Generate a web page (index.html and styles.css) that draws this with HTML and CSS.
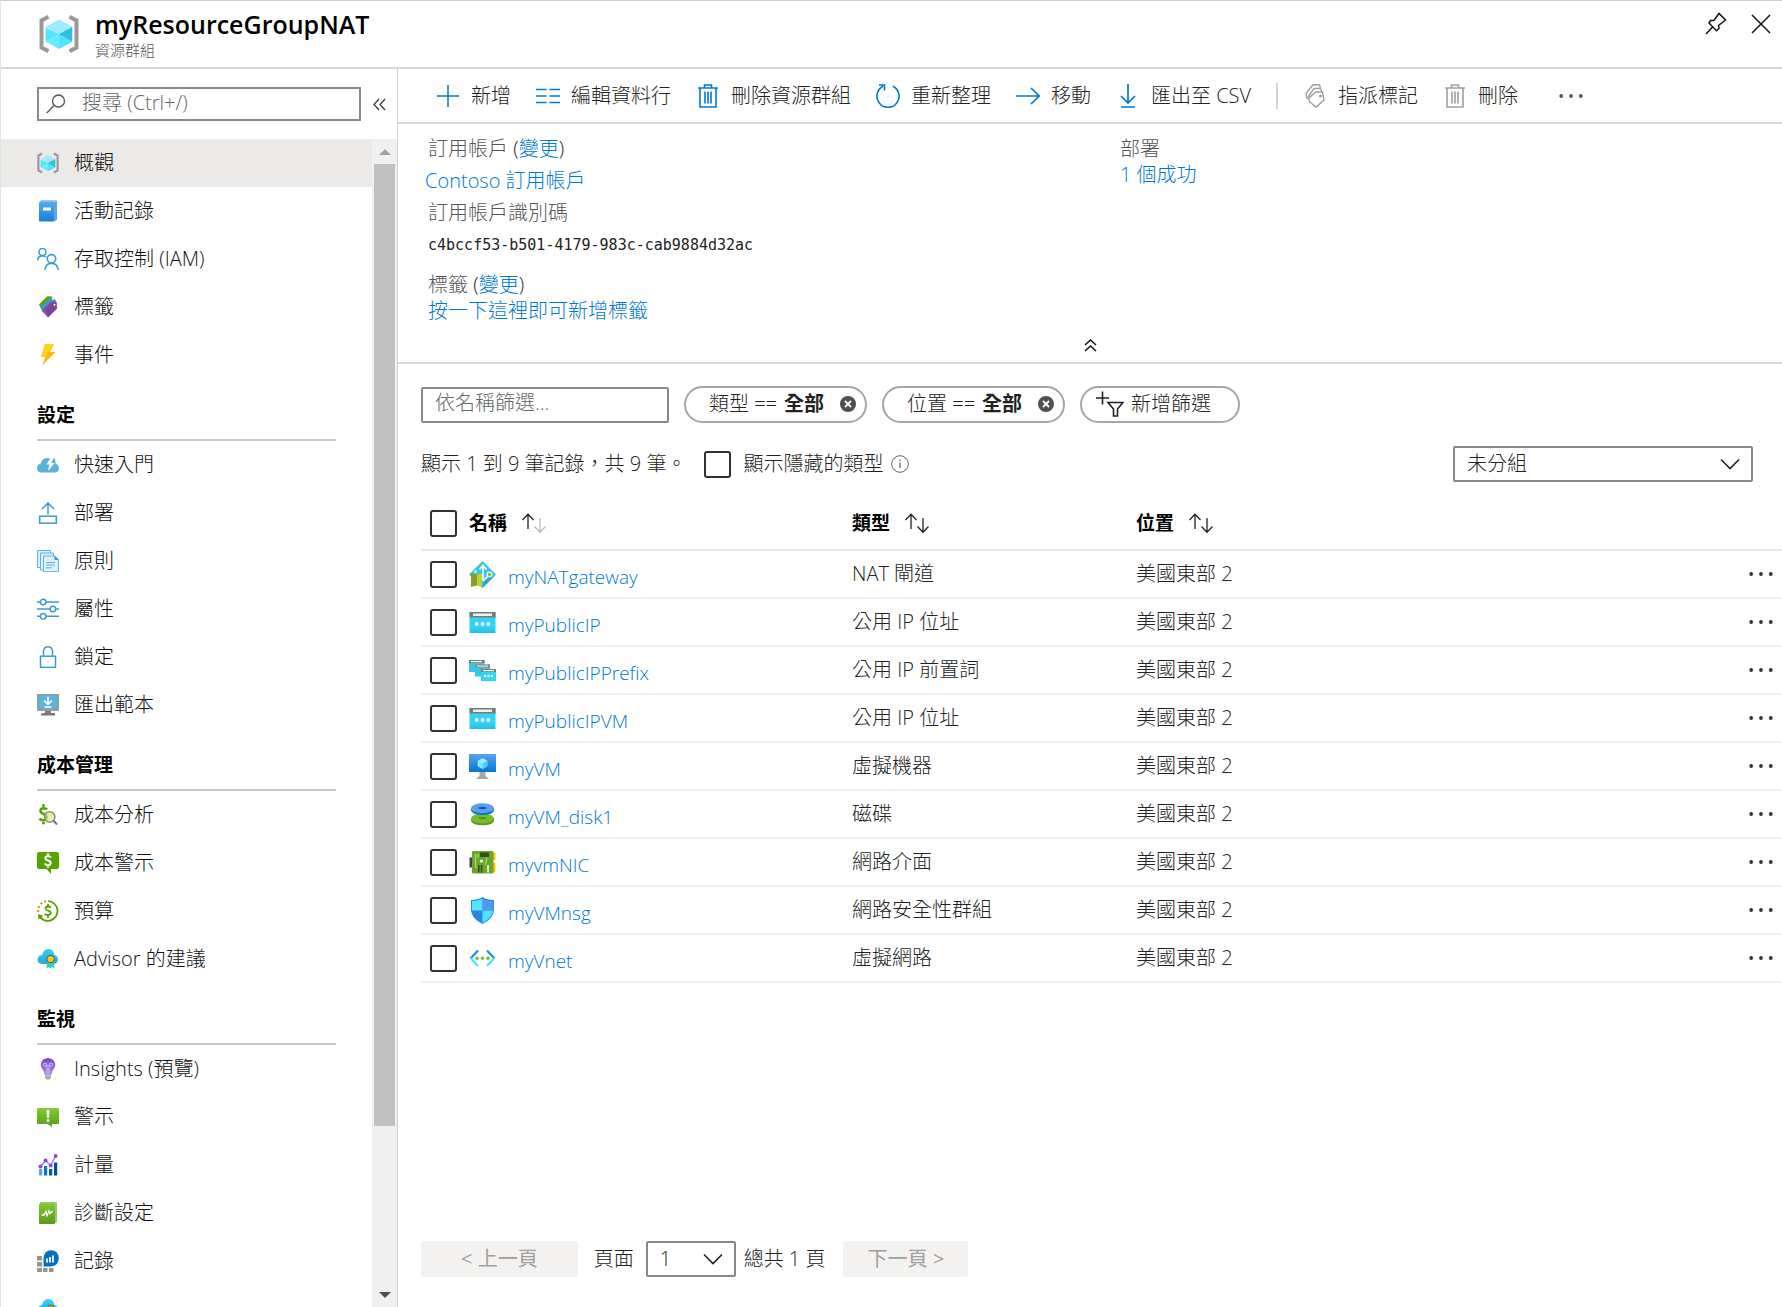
FILE: index.html
```html
<!DOCTYPE html>
<html lang="zh-Hant">
<head>
<meta charset="utf-8">
<meta name="viewport" content="width=device-width, initial-scale=1">
<title>myResourceGroupNAT</title>
<link rel="stylesheet" href="styles.css">
</head>
<body>
<svg class="sprite" aria-hidden="true">
  <defs>
    <linearGradient id="g-book" x1="0" y1="0" x2="0" y2="1"><stop offset="0" stop-color="#4db2f0"/><stop offset="1" stop-color="#1b7fd6"/></linearGradient>
    <linearGradient id="g-cloud" x1="0" y1="0" x2="0" y2="1"><stop offset="0" stop-color="#32d4f5"/><stop offset="1" stop-color="#27a5e0"/></linearGradient>
    <linearGradient id="g-bulb" x1="0" y1="0" x2="0" y2="1"><stop offset="0" stop-color="#7644d0"/><stop offset="1" stop-color="#b18cf5"/></linearGradient>
    <linearGradient id="g-green" x1="0" y1="0" x2="0" y2="1"><stop offset="0" stop-color="#7fcc2e"/><stop offset="1" stop-color="#5c9a1e"/></linearGradient>
    <linearGradient id="g-vm" x1="0" y1="0" x2="0" y2="1"><stop offset="0" stop-color="#5ea0ef"/><stop offset="1" stop-color="#0078d4"/></linearGradient>
    <linearGradient id="g-card" x1="0" y1="0" x2="0" y2="1"><stop offset="0" stop-color="#32d4f5"/><stop offset=".75" stop-color="#32d4f5"/><stop offset="1" stop-color="#2bb9de"/></linearGradient>
  </defs>
  <symbol id="i-rg" viewBox="0 0 40 38">
    <path d="M9.500 1.800L2.500 5.500V32.500L9.500 36.200M30.500 1.800L37.500 5.500V32.500L30.500 36.200" fill="none" stroke="#999" stroke-width="4"/>
    <path d="M20 4.500L33.300 11.800 20 19 6.700 11.800z" fill="#9cebff"/>
    <path d="M6.700 11.800L20 19V33.700L6.700 26.500z" fill="#9cebff"/>
    <path d="M6.700 13.500L20 19 6.700 26.500z" fill="#50e6ff"/>
    <path d="M6.700 26.500L20 19V33.700z" fill="#6aeaff"/>
    <path d="M33.300 11.800L20 19V33.700L33.300 26.500z" fill="#32bedd"/>
    <path d="M33.300 26.500L20 19V33.700z" fill="#50e6ff"/>
  </symbol>
  <symbol id="i-book" viewBox="0 0 22 22">
    <path d="M4.500 0H18.500Q20 0 20 1.500V20H18V2H3Q3 0 4.500 0z" fill="#a9c8e0"/>
    <path d="M2 3Q2 1.500 3.500 1.500H17V20.500Q17 21.500 16 21.500H3Q2 21.500 2 20.500z" fill="url(#g-book)"/>
    <path d="M17 2.500L20 0.800V20L17 21.500z" fill="#5fa7dd"/>
    <rect x="6" y="7.500" width="8" height="3" fill="#fff"/>
  </symbol>
  <symbol id="i-people" viewBox="0 0 22 22" fill="none" stroke="#3a9fd0" stroke-width="1.600">
    <circle cx="5.500" cy="4" r="3.500"/><path d="M.6 12.500Q1 8 5.500 7.600Q8 7.800 9 9"/>
    <circle cx="14.500" cy="10.800" r="4.200"/><path d="M7.800 21.800Q9 15.200 14.500 15.100Q20 15.200 21.300 21.800"/>
  </symbol>
  <symbol id="i-tags" viewBox="0 0 22 22">
    <path d="M2 8.500L10 .5Q16 -1 17.500 3.500L6 16z" fill="#57a300"/>
    <path d="M3 11.500L12 2.800Q18 1.500 19.500 6L8 17z" fill="#3a9bd0"/>
    <path d="M4.500 14.500L14 5.500L19.500 6.300L20 12.500L11 21.500z" fill="#8a4fa5"/>
    <path d="M11 21.500L20 12.500 19.500 6.300 16 5.800 9 13z" fill="#74398f" opacity=".6"/>
    <circle cx="16" cy="2.500" r="1.200" fill="#fff"/><circle cx="17.500" cy="8.800" r="1" fill="#fff"/>
  </symbol>
  <symbol id="i-bolt" viewBox="0 0 22 22">
    <path d="M8 0H17L13 8H18.500L5 21.500L8.500 12.500H4z" fill="#fcb813"/><path d="M8 0H17L8.500 12.500H4z" fill="#ffd31a"/>
  </symbol>
  <symbol id="i-quick" viewBox="0 0 22 22">
    <path d="M4 18.500Q0 18 0 14Q0 10.500 3.500 9.800Q5 4 10.500 4Q12 4 13 4.500L17 3.500Q19 6 18.500 9.500Q22 11 22 14.500Q21.500 18.500 18 18.500z" fill="#59b4d9"/>
    <path d="M14 3L9.500 10.500H12.500L11 17L17.500 9H14.200L17.500 3z" fill="#fff"/>
  </symbol>
  <symbol id="i-deploy" viewBox="0 0 22 22" fill="none" stroke="#3a9bc9" stroke-width="1.500"><rect x="2.700" y="14.200" width="16.600" height="7"/><path d="M11 12.500V.8M5 7L11 1L17 7"/></symbol>
  <symbol id="i-policy" viewBox="0 0 22 22">
    <g fill="#dff0f8" stroke="#59b4d9"><path d="M.5 .5H13.500V17.500H.5z"/><path d="M3.500 3H16.500V20H3.500z"/><path d="M6.500 6H17.500L21.500 10V21.700H6.500z"/></g>
    <path d="M17.500 5.500L22 10H17.500z" fill="#3a9bc9"/><path d="M9 12.500H18M9 15H18M9 17.800H15" stroke="#59b4d9"/>
  </symbol>
  <symbol id="i-props" viewBox="0 0 22 22" fill="none" stroke="#3a9bc9" stroke-width="1.400"><path d="M0 4H3.500M9 4H22M0 11H13M19 11H22M0 18.300H3.500M9 18.300H22"/><circle cx="6.200" cy="4" r="2.800"/><circle cx="15.900" cy="11" r="2.800"/><circle cx="6.200" cy="18.300" r="2.800"/></symbol>
  <symbol id="i-lock" viewBox="0 0 22 22" fill="none" stroke="#3a9bc9" stroke-width="1.500"><rect x="3.500" y="10.200" width="15" height="11.200"/><path d="M6.500 10V5.200Q7 .8 11 .8Q15 .8 15.500 5.200V10"/></symbol>
  <symbol id="i-export" viewBox="0 0 22 22">
    <rect width="22" height="17" fill="#999"/><rect x="1.500" y="1.500" width="19" height="13.500" fill="#59b4d9"/><path d="M8 17H14V19H18V21.500H4V19.500L8 19z" fill="#7a7a7a"/>
    <path d="M11 2.500V9.500M7 6.500L11 10.300L15 6.500M7.500 13H14.500" fill="none" stroke="#fff" stroke-width="1.600"/>
  </symbol>
  <symbol id="i-cost" viewBox="0 0 22 22">
    <path d="M10 5.500Q9 4.200 6.500 4.200Q3.500 4.300 3.500 6.800Q3.600 9 6.500 10Q9.500 11 9.500 13.500Q9 16.200 6 16.200Q3.500 16.200 2.500 14.500" fill="none" stroke="#57a300" stroke-width="2.600"/>
    <circle cx="6.500" cy="1.500" r="1.500" fill="#57a300"/><circle cx="6.500" cy="19" r="1.500" fill="#57a300"/>
    <circle cx="12.700" cy="13" r="5.200" fill="#cfe86a" fill-opacity=".6" stroke="#8a8a8a" stroke-width="1.500"/><path d="M16.500 16.800L20 20.500" stroke="#777" stroke-width="2"/>
  </symbol>
  <symbol id="i-costalert" viewBox="0 0 22 22">
    <path d="M2 0H20Q22 0 22 2V15Q22 17 20 17H14V22L9.500 17H2Q0 17 0 15V2Q0 0 2 0z" fill="#57a300"/>
    <path d="M14 5.500Q13 4 11 4Q8.300 4.200 8.300 6.200Q8.500 8 11 8.500Q13.800 9.200 13.800 11Q13.500 13.200 11 13.200Q8.800 13.200 7.800 11.500M11 1.200V4M11 13V15.800" fill="none" stroke="#fff" stroke-width="1.900"/>
  </symbol>
  <symbol id="i-budget" viewBox="0 0 22 22">
    <path d="M11 1.200A9.800 9.800 0 1 1 2 15.500" fill="none" stroke="#57a300" stroke-width="1.800"/><path d="M1 14L6.500 15.800L1.500 19.500z" fill="#57a300"/>
    <path d="M1.200 12A9.800 9.800 0 0 1 9 1.200" fill="none" stroke="#e08a00" stroke-width="2" stroke-dasharray="2 2.200"/>
    <path d="M14 7.500Q13 6.500 11 6.500Q8.500 6.700 8.500 8.500Q8.700 10 11 10.600Q13.800 11.300 13.800 13Q13.500 15 11 15Q8.800 15 7.800 13.800M11 4V7M11 15V18" fill="none" stroke="#57a300" stroke-width="1.800"/>
  </symbol>
  <symbol id="i-advisor" viewBox="0 0 22 22">
    <path d="M5 16Q.5 15.500 .5 11.500Q1 7.500 5 7Q6.500 1 11.500 1Q16.500 1.500 17.500 7Q21 8 21 11.500Q20.500 15.500 17 16z" fill="url(#g-cloud)"/>
    <path d="M10 14L9.500 20.500L12 19L13.500 21L15 19L17.500 20.500L17 14z" fill="#35d0bd"/><circle cx="13.600" cy="11" r="3.700" fill="#ffca00" stroke="#5a6470" stroke-width="1.200"/>
  </symbol>
  <symbol id="i-bulb" viewBox="0 0 22 22">
    <path d="M11 0Q18 .5 18.300 7Q18 10 15.500 13Q14.500 15 14.200 17.500H7.800Q7.500 15 6.500 13Q4 10 3.700 7Q4 .5 11 0z" fill="url(#g-bulb)"/>
    <path d="M10 16V7.500Q10 5 8 5Q6 5 6.300 7Q7 8.500 10 7.500M12 16V7.500Q12 5 14 5Q16 5 15.700 7Q15 8.500 12 7.500" fill="none" stroke="#d9c4ff"/><path d="M8 18H14V20L12.500 21.500H9.500L8 20z" fill="#aaa"/>
  </symbol>
  <symbol id="i-alert" viewBox="0 0 22 22">
    <path d="M1 2H21Q22 2 22 3V17Q22 18 21 18H15V21L10.500 18H1Q0 18 0 17V3Q0 2 1 2z" fill="url(#g-green)"/><path d="M9.500 4H12.500L12 12H10z" fill="#fff"/><rect x="9.800" y="13.200" width="2.500" height="2.500" fill="#fff"/>
  </symbol>
  <symbol id="i-metrics" viewBox="0 0 22 22">
    <rect x="2" y="15" width="3.200" height="6.500" fill="#5ea0ef"/><rect x="7" y="12" width="3.200" height="9.500" fill="#0078d4"/><rect x="12" y="15" width="3.200" height="6.500" fill="#005ba1"/><rect x="17" y="8.500" width="3.200" height="13" fill="#00508f"/>
    <path d="M3.500 12.500L8.500 6.500L13.700 11.500L18.600 2" fill="none" stroke="#a67af4" stroke-width="1.500"/><g fill="#8a4ae0"><circle cx="3.500" cy="12.500" r="2"/><circle cx="8.500" cy="6.500" r="2"/><circle cx="13.700" cy="11.500" r="2"/><circle cx="18.600" cy="2" r="2"/></g>
  </symbol>
  <symbol id="i-diag" viewBox="0 0 22 22">
    <path d="M4 0H19Q20 0 20 1V20L18 21H3V1Q3 0 4 0z" fill="#9fc47a"/><rect x="2" y="1.500" width="16" height="20.500" rx="1" fill="url(#g-green)"/><path d="M4.500 13H7L9 9.500L10 13.500L12 8.800L13 11.500L15.500 9" fill="none" stroke="#fff" stroke-width="1.400"/>
  </symbol>
  <symbol id="i-logs" viewBox="0 0 22 22">
    <g fill="#949494"><path d="M0 6H5V10.500H0zM0 12H5V16.500H0zM0 18H5V22H0zM6 18H10.500V22H6zM12 18H16.500V22H12z"/></g>
    <path d="M6.500 16.500V8Q7.500 .5 14 .3Q21 .5 21.800 8Q21.500 16 14 16.500z" fill="#0072c6"/><path d="M10 8.500V12.500M13 7V12.500M16 5.500V12.500" stroke="#fff" stroke-width="1.800"/>
  </symbol>

  <symbol id="t-plus" viewBox="0 0 24 24" fill="none" stroke="#0078d4" stroke-width="1.500"><path d="M12 1V23M1 12H23"/></symbol>
  <symbol id="t-cols" viewBox="0 0 24 24" stroke="#0078d4" stroke-width="1.600"><path d="M0 5.500H10.500M0 12H10.500M0 18.500H10.500M13.500 5.500H24M13.500 12H24M13.500 18.500H24"/></symbol>
  <symbol id="t-trash" viewBox="0 0 24 24" fill="none" stroke="currentColor" stroke-width="1.600"><path d="M2 4H22M4 4V23H20V4M8.500 4V1H15.500V4M9 7.500V19.500M12 7.500V19.500M15 7.500V19.500"/></symbol>
  <symbol id="t-refresh" viewBox="0 0 24 24" fill="none" stroke="#0078d4" stroke-width="1.600"><path d="M17 2.200A11 11.200 0 1 1 7 2.200M3 1H8.500V6.500"/></symbol>
  <symbol id="t-arrow" viewBox="0 0 24 24" fill="none" stroke="#0078d4" stroke-width="1.700"><path d="M0 12H23M15 4L23.200 12L15 20"/></symbol>
  <symbol id="t-down" viewBox="0 0 24 24" fill="none" stroke="#0078d4" stroke-width="1.700"><path d="M12 0V18.500M5 12L12 19L19 12M5 23H19"/></symbol>
  <symbol id="t-tags" viewBox="0 0 24 24" fill="none" stroke="#a0a0a0" stroke-width="1.400"><path d="M4 15L3 9.500L10 .8H16.500L17.500 4M5 13L11 4.500H17.500L19 8M7 19L5.500 14.500L12.500 8H19.500L21 16L13 23.300L7 18"/><circle cx="17.500" cy="12" r=".8"/></symbol>
  <symbol id="t-more" viewBox="0 0 24 6"><circle cx="2.200" cy="3" r="1.900"/><circle cx="12" cy="3" r="1.900"/><circle cx="21.800" cy="3" r="1.900"/></symbol>
  <symbol id="t-sort" viewBox="0 0 26 22" fill="none" stroke="#222" stroke-width="1.300"><path d="M7 17V2.500M1.500 8L7 2.300L12.500 8"/><path class="sort-down" d="M19 6V20M13.500 14.500L19 20.200L24.500 14.500"/></symbol>
  <symbol id="t-chev" viewBox="0 0 20 12" fill="none" stroke="#222" stroke-width="1.600"><path d="M1 1.500L10 10.500L19 1.500"/></symbol>

  <symbol id="r-nat" viewBox="0 0 27 27">
    <path d="M13.500 0L27 13.500L13.500 27L0 13.500z" fill="#32c8ea"/><path d="M13.500 27L25 15.500L20 16L15 21z" fill="#2aa5c9"/>
    <path d="M2 12L8 13.500V24.500L2 26z" fill="#86a02a"/><path d="M8 13.500L13 12.500V26L8 24.500z" fill="#b9d532"/>
    <path d="M14 20V5M10.500 8.500L14 4.500L17.500 8.500M14 20L20 14" fill="none" stroke="#fff" stroke-width="1.600"/><circle cx="20.500" cy="13.500" r="3" fill="#fff"/><circle cx="20.500" cy="13.500" r="1.700" fill="#86c232"/><circle cx="6.500" cy="10.500" r="1.500" fill="#d8f6ff"/>
  </symbol>
  <symbol id="r-ip" viewBox="0 0 27 27">
    <rect x=".5" y="3" width="26" height="21" fill="url(#g-card)"/><rect x=".5" y="3" width="26" height="5.500" fill="#7a7a7a"/><rect x="4" y="4.500" width="19" height="2.500" fill="#f2f2f2"/>
    <g fill="#fff"><circle cx="7.700" cy="15" r="1.900"/><circle cx="13.500" cy="15" r="1.900"/><circle cx="19.300" cy="15" r="1.900"/></g>
  </symbol>
  <symbol id="r-prefix" viewBox="0 0 27 27">
    <rect y="3" width="15.500" height="12" fill="#32c8ea"/><rect y="3" width="15.500" height="3" fill="#7a7a7a"/><rect x="2" y="4" width="11" height="1.200" fill="#fff"/>
    <rect x="6" y="7.500" width="15" height="12" fill="#32c8ea"/><rect x="6" y="7.500" width="15" height="3.200" fill="#8a8a8a"/><rect x="8" y="8.500" width="11" height="1.300" fill="#ddd"/>
    <rect x="12" y="12" width="15" height="12" fill="#32d4f5"/><rect x="12" y="12" width="15" height="3" fill="#7a7a7a"/><rect x="14" y="13" width="11" height="1.200" fill="#fff"/>
    <g fill="#fff"><circle cx="16" cy="19" r="1.200"/><circle cx="19.500" cy="19" r="1.200"/><circle cx="23" cy="19" r="1.200"/></g>
  </symbol>
  <symbol id="r-vm" viewBox="0 0 27 27">
    <rect y="1" width="27" height="18" rx=".6" fill="url(#g-vm)"/><path d="M10.500 19H16.500V23L20 26H7L10.500 23z" fill="#a8a8a8"/>
    <path d="M13.500 5L18.300 7.700V13.200L13.500 16L8.700 13.200V7.700z" fill="#9cebff"/><path d="M18.300 7.700V13.200L13.500 16V10.500z" fill="#50d0f0"/><path d="M8.700 7.700L13.500 10.500V16z" fill="#6ae6ff"/>
  </symbol>
  <symbol id="r-disk" viewBox="0 0 27 27">
    <path d="M2 17.500V20Q4 24.300 13.500 24.300Q23 24.300 25 20V17.500z" fill="#5e9624"/><ellipse cx="13.500" cy="17.500" rx="11.500" ry="5" fill="#76bc2d"/><ellipse cx="13.500" cy="17" rx="4" ry="1" fill="#558b21"/>
    <path d="M2 7.500V9.500Q4 14 13.500 14Q23 14 25 9.500V7.500z" fill="#0078d4"/><ellipse cx="13.500" cy="7.200" rx="11.500" ry="5" fill="#5ea0ef"/><ellipse cx="13.500" cy="7" rx="4" ry="1.200" fill="#0062ad"/>
  </symbol>
  <symbol id="r-nic" viewBox="0 0 27 27">
    <rect x=".5" y="8.500" width="3" height="10" fill="#444"/><rect x="24" y="4" width="2.500" height="7" fill="#ffca00"/><rect x="24" y="14" width="2.500" height="9" fill="#ffca00"/>
    <rect x="3" y="2" width="21.500" height="22.500" rx="1" fill="#69a52c"/><rect x="11" y="3.500" width="9" height="4.500" fill="#2f4f14"/>
    <path d="M6.500 5V18H8M9 5V9M17.500 8V12L16 16" fill="none" stroke="#a6e04a" stroke-width="1.300"/><circle cx="12.500" cy="12" r="1.600" fill="#fff"/><path d="M9.800 16V23.500M12.500 16V23.500" stroke="#2f4f14" stroke-width="1.500"/><path d="M19 16V23.500" stroke="#fff" stroke-width="1.500"/>
  </symbol>
  <symbol id="r-nsg" viewBox="0 0 27 27">
    <path d="M13.500 0Q17 2.500 25 3V13Q24.500 21.500 13.500 27Q2.500 21.500 2 13V3Q10 2.500 13.500 0z" fill="#2c86e0"/>
    <path d="M13.500 1.500Q10 3.700 3 4.200V13.500H13.500z" fill="#50e6ff"/><path d="M13.500 13.500H24Q23 21 13.500 26z" fill="#50e6ff"/><path d="M13.500 1.500Q17 3.700 24 4.200V13.500H13.500z" fill="#4f9cec"/>
  </symbol>
  <symbol id="r-vnet" viewBox="0 0 27 27" fill="none" stroke-width="2.200">
    <path d="M9 5.500L1.500 13.500M18 5.500L25.500 13.500" stroke="#1b8fe0"/><path d="M1.500 13L9 21M25.500 13L18 21" stroke="#50e0fa"/><g fill="#76bc2d"><circle cx="8" cy="13.300" r="1.700"/><circle cx="13.500" cy="13.300" r="1.700"/><circle cx="19" cy="13.300" r="1.700"/></g>
  </symbol>
</svg>

<div class="blade">
  <header class="blade-head">
    <svg class="blade-icon"><use href="#i-rg"/></svg>
    <div class="blade-titles">
      <h1>myResourceGroupNAT</h1>
      <p>資源群組</p>
    </div>
    <button class="plain" aria-label="釘選"><svg width="22" height="24" viewBox="0 0 22 24" fill="none" stroke="#111" stroke-width="1.500"><path d="M1 22L7.500 15M4 11L11.500 18.800L14 16.500L13.500 13.500L20.500 8L14 1.500L8.800 8.500L5.500 8.500z"/></svg></button>
    <button class="plain" aria-label="關閉"><svg width="20" height="24" viewBox="0 0 20 24" fill="none" stroke="#111" stroke-width="1.500"><path d="M1 3L19 21M19 3L1 21"/></svg></button>
  </header>

  <div class="blade-body">
    <aside class="side">
      <div class="search-row">
        <div class="search">
          <svg width="20" height="20" viewBox="0 0 20 20" fill="none" stroke="#555" stroke-width="1.300"><circle cx="12.500" cy="7" r="6"/><path d="M8 11.500L.8 19"/></svg>
          <input type="text" placeholder="搜尋 (Ctrl+/)" aria-label="搜尋">
        </div>
        <button class="plain" aria-label="摺疊功能表"><svg width="13" height="13" viewBox="0 0 13 13" fill="none" stroke="#333" stroke-width="1.200"><path d="M6 1L1 6.500L6 12M12 1L7 6.500L12 12"/></svg></button>
      </div>
      <div class="side-scroll">
        <nav class="menu">
          <a class="current" href="#"><svg><use href="#i-rg"/></svg>概觀</a>
          <a href="#"><svg><use href="#i-book"/></svg>活動記錄</a>
          <a href="#"><svg><use href="#i-people"/></svg>存取控制 (IAM)</a>
          <a href="#"><svg><use href="#i-tags"/></svg>標籤</a>
          <a href="#"><svg><use href="#i-bolt"/></svg>事件</a>
          <h2>設定</h2>
          <a href="#"><svg><use href="#i-quick"/></svg>快速入門</a>
          <a href="#"><svg><use href="#i-deploy"/></svg>部署</a>
          <a href="#"><svg><use href="#i-policy"/></svg>原則</a>
          <a href="#"><svg><use href="#i-props"/></svg>屬性</a>
          <a href="#"><svg><use href="#i-lock"/></svg>鎖定</a>
          <a href="#"><svg><use href="#i-export"/></svg>匯出範本</a>
          <h2>成本管理</h2>
          <a href="#"><svg><use href="#i-cost"/></svg>成本分析</a>
          <a href="#"><svg><use href="#i-costalert"/></svg>成本警示</a>
          <a href="#"><svg><use href="#i-budget"/></svg>預算</a>
          <a href="#"><svg><use href="#i-advisor"/></svg>Advisor 的建議</a>
          <h2>監視</h2>
          <a href="#"><svg><use href="#i-bulb"/></svg>Insights (預覽)</a>
          <a href="#"><svg><use href="#i-alert"/></svg>警示</a>
          <a href="#"><svg><use href="#i-metrics"/></svg>計量</a>
          <a href="#"><svg><use href="#i-diag"/></svg>診斷設定</a>
          <a href="#"><svg><use href="#i-logs"/></svg>記錄</a>
          <a href="#" aria-label="Advisor"><svg><use href="#i-advisor"/></svg></a>
        </nav>
        <div class="bar" aria-hidden="true">
          <svg width="12" height="6" viewBox="0 0 12 6"><path d="M0 6L6 0L12 6z" fill="#a3a3a3"/></svg>
          <div class="track"><div class="thumb"></div></div>
          <svg width="12" height="6" viewBox="0 0 12 6"><path d="M0 0L6 6L12 0z" fill="#505050"/></svg>
        </div>
      </div>
    </aside>

    <main class="main">
      <div class="toolbar">
        <button><svg><use href="#t-plus"/></svg>新增</button>
        <button><svg><use href="#t-cols"/></svg>編輯資料行</button>
        <button><svg class="blue"><use href="#t-trash"/></svg>刪除資源群組</button>
        <button><svg><use href="#t-refresh"/></svg>重新整理</button>
        <button><svg><use href="#t-arrow"/></svg>移動</button>
        <button><svg><use href="#t-down"/></svg>匯出至 CSV</button>
        <span class="divider"></span>
        <button><svg><use href="#t-tags"/></svg>指派標記</button>
        <button><svg class="gray"><use href="#t-trash"/></svg>刪除</button>
        <button class="more-tools" aria-label="其他"><svg><use href="#t-more"/></svg></button>
      </div>

      <section class="essentials">
        <div class="facts">
          <div class="facts-left">
            <p>訂用帳戶 <span class="ink">(<a href="#">變更</a>)</span></p>
            <p class="account"><a href="#">Contoso 訂用帳戶</a></p>
            <p>訂用帳戶識別碼</p>
            <p class="mono">c4bccf53-b501-4179-983c-cab9884d32ac</p>
            <div class="tags">
              <p>標籤 <span class="ink">(<a href="#">變更</a>)</span></p>
              <p><a href="#">按一下這裡即可新增標籤</a></p>
            </div>
          </div>
          <div class="facts-right">
            <p>部署</p>
            <p><a href="#">1 個成功</a></p>
          </div>
        </div>
        <button class="plain fold" aria-label="收合"><svg width="13" height="13" viewBox="0 0 13 13" fill="none" stroke="#111" stroke-width="1.500"><path d="M1 6L6.500 1L12 6M1 12L6.500 7L12 12"/></svg></button>
      </section>

      <section class="list">
        <div class="filters">
          <input class="name-filter" type="text" placeholder="依名稱篩選..." aria-label="依名稱篩選">
          <button class="pill">類型 == <b>全部</b><svg width="16" height="16" viewBox="0 0 16 16"><circle cx="8" cy="8" r="8" fill="#505050"/><path d="M5 5L11 11M11 5L5 11" stroke="#fff" stroke-width="1.800"/></svg></button>
          <button class="pill">位置 == <b>全部</b><svg width="16" height="16" viewBox="0 0 16 16"><circle cx="8" cy="8" r="8" fill="#505050"/><path d="M5 5L11 11M11 5L5 11" stroke="#fff" stroke-width="1.800"/></svg></button>
          <button class="pill add"><svg width="28" height="26" viewBox="0 0 28 26" fill="none" stroke="#222" stroke-width="1.600"><path d="M0 7H13M6.500 .5V13.500M12 11.500H27L21.500 18V25H17.500V18z"/></svg>新增篩選</button>
        </div>

        <div class="summary">
          <span>顯示 1 到 9 筆記錄，共 9 筆。</span>
          <label><input type="checkbox">顯示隱藏的類型</label>
          <svg width="18" height="18" viewBox="0 0 18 18" fill="none" stroke="#666"><circle cx="9" cy="9" r="8.300"/><path d="M9 7.500V13M9 4.500V6" stroke-width="1.300"/></svg>
          <span class="drop group"><select aria-label="分組"><option>未分組</option></select><svg><use href="#t-chev"/></svg></span>
        </div>

        <table class="grid">
          <colgroup><col class="c-check"><col class="c-name"><col class="c-type"><col><col class="c-more"></colgroup>
          <thead>
            <tr>
              <th><input type="checkbox" aria-label="全選"></th>
              <th><span class="sort half">名稱<svg><use href="#t-sort"/></svg></span></th>
              <th><span class="sort">類型<svg><use href="#t-sort"/></svg></span></th>
              <th><span class="sort">位置<svg><use href="#t-sort"/></svg></span></th>
              <th></th>
            </tr>
          </thead>
          <tbody>
            <tr><td><input type="checkbox" aria-label="myNATgateway"></td><td><a href="#"><svg><use href="#r-nat"/></svg><span>myNATgateway</span></a></td><td>NAT 閘道</td><td>美國東部 2</td><td><button class="plain" aria-label="其他"><svg><use href="#t-more"/></svg></button></td></tr>
            <tr><td><input type="checkbox" aria-label="myPublicIP"></td><td><a href="#"><svg><use href="#r-ip"/></svg><span>myPublicIP</span></a></td><td>公用 IP 位址</td><td>美國東部 2</td><td><button class="plain" aria-label="其他"><svg><use href="#t-more"/></svg></button></td></tr>
            <tr><td><input type="checkbox" aria-label="myPublicIPPrefix"></td><td><a href="#"><svg><use href="#r-prefix"/></svg><span>myPublicIPPrefix</span></a></td><td>公用 IP 前置詞</td><td>美國東部 2</td><td><button class="plain" aria-label="其他"><svg><use href="#t-more"/></svg></button></td></tr>
            <tr><td><input type="checkbox" aria-label="myPublicIPVM"></td><td><a href="#"><svg><use href="#r-ip"/></svg><span>myPublicIPVM</span></a></td><td>公用 IP 位址</td><td>美國東部 2</td><td><button class="plain" aria-label="其他"><svg><use href="#t-more"/></svg></button></td></tr>
            <tr><td><input type="checkbox" aria-label="myVM"></td><td><a href="#"><svg><use href="#r-vm"/></svg><span>myVM</span></a></td><td>虛擬機器</td><td>美國東部 2</td><td><button class="plain" aria-label="其他"><svg><use href="#t-more"/></svg></button></td></tr>
            <tr><td><input type="checkbox" aria-label="myVM_disk1"></td><td><a href="#"><svg><use href="#r-disk"/></svg><span>myVM_disk1</span></a></td><td>磁碟</td><td>美國東部 2</td><td><button class="plain" aria-label="其他"><svg><use href="#t-more"/></svg></button></td></tr>
            <tr><td><input type="checkbox" aria-label="myvmNIC"></td><td><a href="#"><svg><use href="#r-nic"/></svg><span>myvmNIC</span></a></td><td>網路介面</td><td>美國東部 2</td><td><button class="plain" aria-label="其他"><svg><use href="#t-more"/></svg></button></td></tr>
            <tr><td><input type="checkbox" aria-label="myVMnsg"></td><td><a href="#"><svg><use href="#r-nsg"/></svg><span>myVMnsg</span></a></td><td>網路安全性群組</td><td>美國東部 2</td><td><button class="plain" aria-label="其他"><svg><use href="#t-more"/></svg></button></td></tr>
            <tr><td><input type="checkbox" aria-label="myVnet"></td><td><a href="#"><svg><use href="#r-vnet"/></svg><span>myVnet</span></a></td><td>虛擬網路</td><td>美國東部 2</td><td><button class="plain" aria-label="其他"><svg><use href="#t-more"/></svg></button></td></tr>
          </tbody>
        </table>

        <div class="pager">
          <button class="step prev" disabled>&lt; 上一頁</button>
          <label for="page">頁面</label>
          <span class="drop page"><select id="page"><option>1</option></select><svg><use href="#t-chev"/></svg></span>
          <span class="total">總共 1 頁</span>
          <button class="step" disabled>下一頁 &gt;</button>
        </div>
      </section>
    </main>
  </div>
</div>
</body>
</html>
```
FILE: styles.css
```css
* { box-sizing: border-box; }

body {
  margin: 0;
  background: #fff;
  color: #222;
  font-family: "Open Sans", "Noto Sans CJK TC", sans-serif;
  font-size: 20px;
  font-weight: 300;
  line-height: 26px;
}

h1, h2, p { margin: 0; }
a { color: #0078d4; text-decoration: none; }
svg { display: block; flex: none; }
button, input, select { font: inherit; color: inherit; }
button { background: none; border: 0; padding: 0; white-space: nowrap; }
input::placeholder { color: #666; opacity: 1; }
.plain { display: block; }
.sprite { position: absolute; width: 0; height: 0; }

input[type="checkbox"] {
  appearance: none;
  display: block;
  flex: none;
  width: 27px;
  height: 27px;
  margin: 0;
  border: 2px solid #323130;
  border-radius: 3px;
  background: #fff;
}

.blade {
  display: flex;
  flex-direction: column;
  height: 100vh;
  border-top: 1px solid #d0d0d0;
  border-left: 1px solid #e4e4e4;
}

.blade-head {
  display: flex;
  align-items: flex-start;
  gap: 24px;
  height: 68px;
  padding: 10px 11px 0 38px;
  border-bottom: 2px solid #d9d9d9;
}
.blade-icon { width: 40px; height: 38px; margin-top: 4px; }
.blade-titles { flex: 1; margin-left: -8px; }
.blade-titles h1 { font-size: 25px; font-weight: 600; line-height: 26px; color: #000; }
.blade-titles p { font-size: 15px; line-height: 26px; color: #555; }
.blade-head .plain { margin-top: 1px; }

.blade-body { display: flex; flex: 1; min-height: 0; }

.side {
  display: flex;
  flex-direction: column;
  flex: none;
  width: 397px;
  border-right: 1px solid #d0d0d0;
}
.search-row {
  display: flex;
  align-items: center;
  gap: 12px;
  height: 70px;
  padding: 0 11px 0 36px;
}
.search {
  display: flex;
  align-items: center;
  flex: 1;
  gap: 16px;
  height: 34px;
  padding: 0 7px;
  border: 2px solid #8a8a8a;
}
.search input { flex: 1; min-width: 0; padding: 0 0 2px; border: 0; outline: 0; background: none; }

.side-scroll { display: flex; flex: 1; min-height: 0; }
.menu { flex: 1; overflow: hidden; }
.menu a {
  display: flex;
  align-items: center;
  gap: 15px;
  height: 48px;
  padding-left: 36px;
  color: #111;
}
.menu a.current { background: #ebeae9; }
.menu svg { width: 22px; height: 22px; }
.menu h2 {
  height: 62px;
  margin: 0 36px;
  padding-top: 23px;
  border-bottom: 2px solid #c8c8c8;
  font-size: 19px;
  font-weight: 600;
  line-height: 26px;
  color: #000;
}

.bar {
  display: flex;
  flex-direction: column;
  align-items: center;
  gap: 9px;
  width: 25px;
  padding: 10px 0 9px;
  background: #f0f0f0;
}
.track { flex: 1; width: 21px; }
.thumb { height: 86%; background: #c1c1c1; }

.main { display: flex; flex-direction: column; flex: 1; min-width: 0; }

.toolbar {
  display: flex;
  align-items: center;
  gap: 25px;
  height: 55px;
  padding-left: 38px;
  border-bottom: 2px solid #d9d9d9;
}
.toolbar button { display: flex; align-items: center; gap: 11px; }
.toolbar svg { width: 24px; height: 24px; }
.toolbar .blue { color: #0078d4; }
.toolbar .gray { color: #a0a0a0; }
.toolbar .more-tools { margin-left: 16px; }
.toolbar .more-tools svg { height: 6px; fill: #555; }
.divider { width: 2px; height: 26px; background: #d2d2d2; }

.essentials {
  display: flex;
  flex-direction: column;
  padding: 12px 0 10px;
  border-bottom: 2px solid #d9d9d9;
  color: #555;
}
.facts { display: flex; padding-left: 30px; }
.facts-left { display: grid; gap: 6px; flex: 0 0 692px; }
.facts-right { flex: 1; }
.account { margin-left: -3px; }
.tags { margin-top: 8px; }
.ink { color: #222; }
.mono { font-family: "DejaVu Sans Mono", monospace; font-size: 15px; font-weight: 400; color: #222; }
.fold { align-self: center; margin-top: 15px; }

.list { display: flex; flex-direction: column; flex: 1; padding: 22px 0 30px 23px; }

.filters { display: flex; align-items: center; gap: 15px; }
.name-filter {
  width: 248px;
  height: 36px;
  padding: 0 12px 4px;
  border: 2px solid #8a8886;
  border-radius: 2px;
}
.pill {
  display: flex;
  align-items: center;
  gap: 7px;
  height: 37px;
  padding: 0 9px 2px 23px;
  border: 2px solid #a6a6a6;
  border-radius: 19px;
}
.pill b { font-weight: 600; }
.pill svg { margin-left: 9px; }
.pill.add { padding: 0 27px 2px 14px; }
.pill.add svg { margin-left: 0; }

.summary { display: flex; align-items: center; margin-top: 23px; padding-right: 29px; }
.summary label { display: flex; align-items: center; gap: 12px; margin: 0 8px 0 18px; }

.drop { display: grid; align-items: center; }
.drop select {
  grid-area: 1 / 1;
  appearance: none;
  height: 36px;
  padding: 0 12px;
  border: 2px solid #8a8886;
  border-radius: 2px;
  background: #fff;
}
.drop svg { grid-area: 1 / 1; justify-self: end; width: 20px; height: 12px; margin-right: 13px; pointer-events: none; }
.group { width: 300px; margin-left: auto; }
.page { width: 90px; }

.grid { width: 100%; margin-top: 15px; table-layout: fixed; border-spacing: 0; }
.grid th, .grid td { padding: 0; border-bottom: 2px solid #f0f0f0; text-align: left; }
.grid th { height: 54px; border-bottom-color: #e6e6e6; font-size: 19px; font-weight: 600; color: #000; }
.grid td { height: 48px; }
.grid input { margin-left: 9px; }
.c-check { width: 48px; }
.c-name { width: 383px; }
.c-type { width: 284px; }
.c-more { width: 33px; }
.sort { display: flex; align-items: center; gap: 14px; }
.sort svg { width: 26px; height: 22px; }
.sort.half { --down: #bbb; }
.sort-down { stroke: var(--down, #222); }
.grid td a { display: flex; align-items: center; gap: 12px; font-size: 19px; }
.grid td a svg { width: 27px; height: 27px; }
.grid td a span { padding-top: 6px; }
.grid td button svg { width: 24px; height: 6px; fill: #333; }

.pager { display: flex; align-items: center; margin-top: auto; }
.step {
  height: 36px;
  padding: 0 24px;
  border-radius: 2px;
  background: #f3f2f1;
  color: #a19f9d;
  font-weight: 400;
}
.step.prev { padding: 0 40px; }
.pager label { margin: 0 12px 0 16px; }
.total { margin: 0 18px 0 8px; }
```
